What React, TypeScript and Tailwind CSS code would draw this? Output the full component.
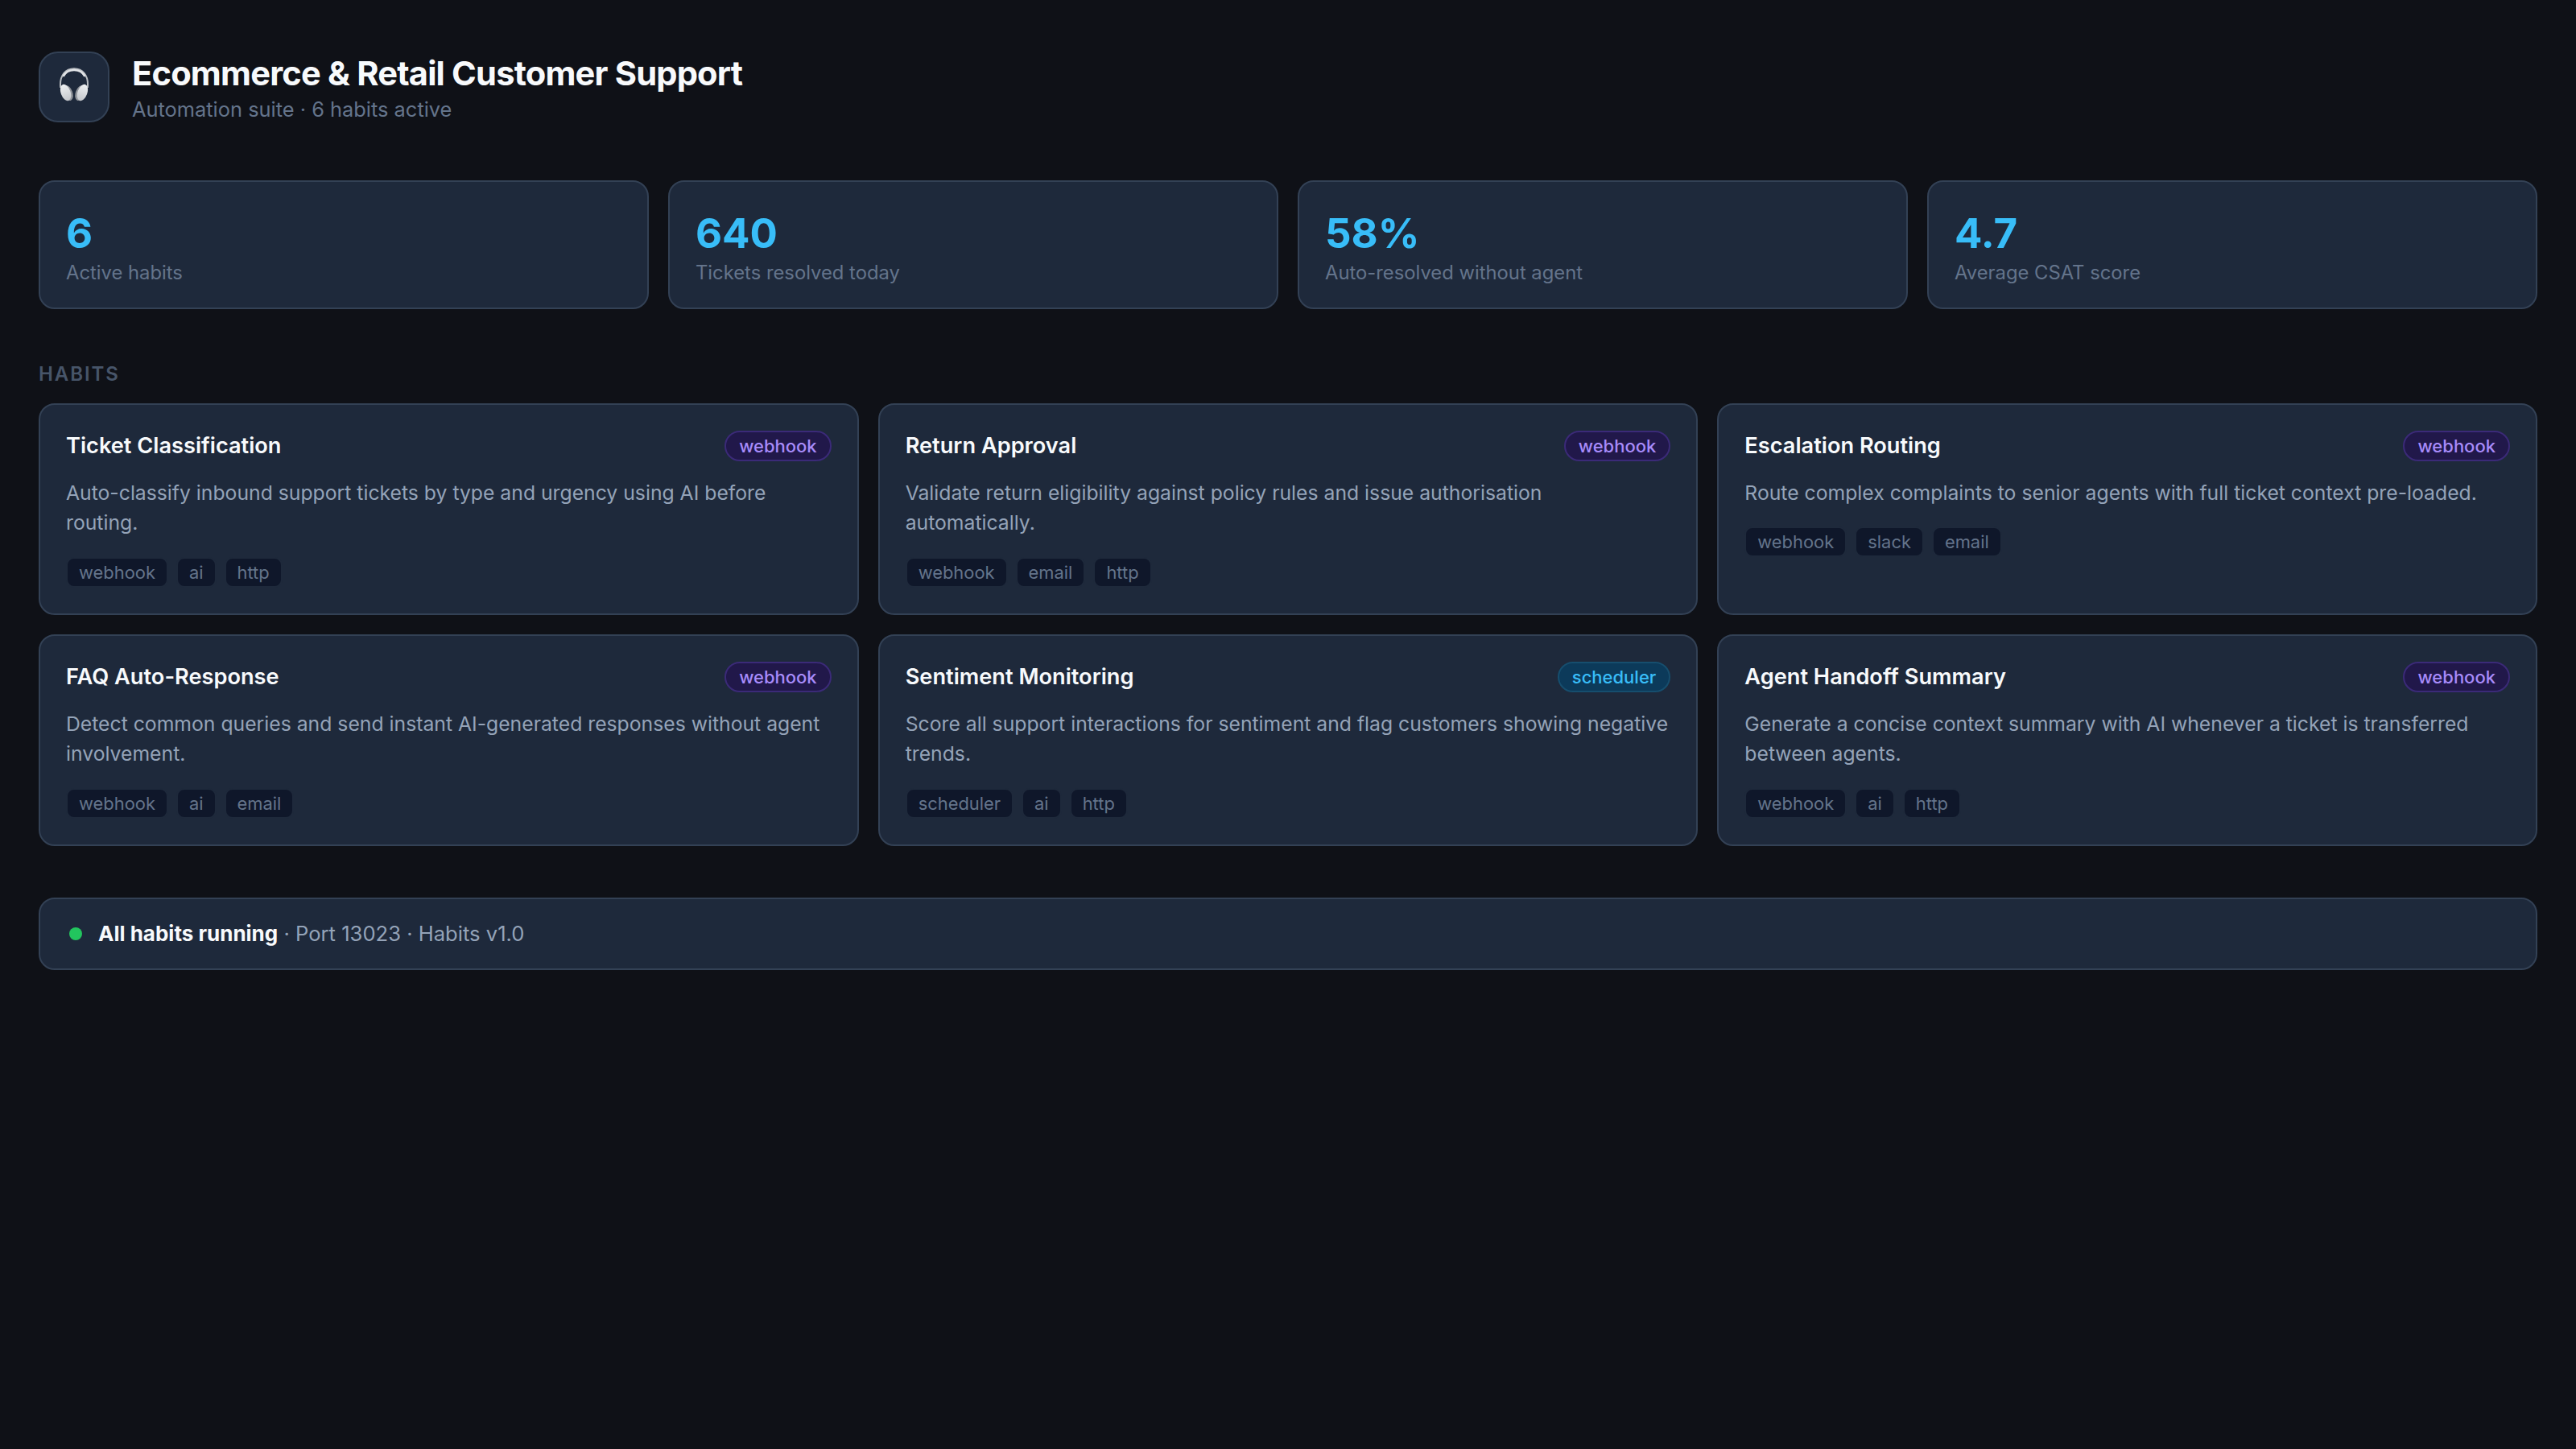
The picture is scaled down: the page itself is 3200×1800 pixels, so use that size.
const stats = [
  { value: "6", label: "Active habits" },
  { value: "640", label: "Tickets resolved today" },
  { value: "58%", label: "Auto-resolved without agent" },
  { value: "4.7", label: "Average CSAT score" },
]

const habits = [
  {
    name: "Ticket Classification",
    trigger: "webhook",
    desc: "Auto-classify inbound support tickets by type and urgency using AI before routing.",
    tags: ["webhook", "ai", "http"],
  },
  {
    name: "Return Approval",
    trigger: "webhook",
    desc: "Validate return eligibility against policy rules and issue authorisation automatically.",
    tags: ["webhook", "email", "http"],
  },
  {
    name: "Escalation Routing",
    trigger: "webhook",
    desc: "Route complex complaints to senior agents with full ticket context pre-loaded.",
    tags: ["webhook", "slack", "email"],
  },
  {
    name: "FAQ Auto-Response",
    trigger: "webhook",
    desc: "Detect common queries and send instant AI-generated responses without agent involvement.",
    tags: ["webhook", "ai", "email"],
  },
  {
    name: "Sentiment Monitoring",
    trigger: "scheduler",
    desc: "Score all support interactions for sentiment and flag customers showing negative trends.",
    tags: ["scheduler", "ai", "http"],
  },
  {
    name: "Agent Handoff Summary",
    trigger: "webhook",
    desc: "Generate a concise context summary with AI whenever a ticket is transferred between agents.",
    tags: ["webhook", "ai", "http"],
  },
]

function Headphones() {
  return (
    <svg className="mb-[6px]" width="38" height="42" viewBox="0 0 38 42" fill="none">
      <defs>
        <linearGradient id="cup" x1="0" y1="0" x2="0" y2="1">
          <stop offset="0" stopColor="#eff1f3" />
          <stop offset="1" stopColor="#c3c6cb" />
        </linearGradient>
      </defs>
      {/* band */}
      <path d="M2.2 25 C0.5 9 9 1.2 19 1.2 C29 1.2 37.5 9 35.8 25" stroke="#b9bdc2" strokeWidth="2" />
      <path d="M5.5 11 C8.5 5 13 3 19 3 C25 3 29.5 5 32.5 11" stroke="#e2e4e7" strokeWidth="2.6" />
      {/* left cup */}
      <ellipse cx="11.5" cy="31.5" rx="5.6" ry="10" transform="rotate(-20 11.5 31.5)" fill="#8f9399" />
      <ellipse cx="8.6" cy="31" rx="6" ry="10.6" transform="rotate(-20 8.6 31)" fill="url(#cup)" />
      {/* right cup */}
      <ellipse cx="26.5" cy="31.5" rx="5.6" ry="10" transform="rotate(20 26.5 31.5)" fill="#8f9399" />
      <ellipse cx="29.4" cy="31" rx="6" ry="10.6" transform="rotate(20 29.4 31)" fill="url(#cup)" />
    </svg>
  )
}

export default function App() {
  return (
    <div className="min-h-screen bg-[#0f1117] px-[48px] pt-[64px] font-['Inter',sans-serif] text-[#f8fafc]">
      <header className="flex h-[88px] items-center gap-[28px] mb-[72px]">
        <div className="flex h-[88px] w-[88px] items-center justify-center rounded-[24px] border-2 border-[#334155] bg-[#1e293b]">
          <Headphones />
        </div>
        <div className="pt-[2px]">
          <h1 className="text-[41.6px] font-bold leading-[50px] tracking-[-0.8px] text-[#f8fafc]">
            Ecommerce &amp; Retail Customer Support
          </h1>
          <p className="mt-[4px] text-[25.4px] leading-[32px] text-[#64748b]">Automation suite · 6 habits active</p>
        </div>
      </header>

      <section className="grid grid-cols-4 gap-[24px] mb-[66px]">
        {stats.map(s => (
          <div key={s.label} className="h-[160px] rounded-[20px] border-2 border-[#334155] bg-[#1e293b] px-[32px] pt-[30px]">
            <div className="text-[51px] font-bold leading-[68px] text-[#38bdf8]">{s.value}</div>
            <div className="text-[23.8px] leading-[29px] text-[#64748b]">{s.label}</div>
          </div>
        ))}
      </section>

      <h2 className="mb-[21px] text-[24px] font-semibold uppercase leading-[30px] tracking-[1.92px] text-[#475569]">Habits</h2>

      <section className="grid grid-cols-3 gap-[24px] mb-[64px]">
        {habits.map(h => (
          <div key={h.name} className="flex h-[263px] flex-col rounded-[20px] border-2 border-[#334155] bg-[#1e293b] p-[32px]">
            <div className="flex items-center justify-between">
              <span className="text-[27.2px] font-semibold leading-[38px] text-[#f8fafc]">{h.name}</span>
              {h.trigger === "scheduler" ? (
                <span className="rounded-full border-2 border-[#164e6e] bg-[#0c3a5a] px-[16px] text-[22px] font-medium leading-[34px] text-[#38bdf8]">
                  {h.trigger}
                </span>
              ) : (
                <span className="rounded-full border-2 border-[#3b2a78] bg-[#21184a] px-[16px] text-[22px] font-medium leading-[34px] text-[#a78bfa]">
                  {h.trigger}
                </span>
              )}
            </div>
            <p className="mt-[21px] mb-[23px] text-[24.74px] leading-[37.44px] text-[#94a3b8]">{h.desc}</p>
            <div className="flex gap-[10px]">
              {h.tags.map(t => (
                <span key={t} className="rounded-[10px] border-2 border-[#1e293b] bg-[#0f172a] px-[14px] text-[21.9px] leading-[34px] text-[#64748b]">
                  {t}
                </span>
              ))}
            </div>
          </div>
        ))}
      </section>

      <footer className="flex h-[90px] items-center gap-[20px] rounded-[20px] border-2 border-[#334155] bg-[#1e293b] px-[36px] text-[25.6px] text-[#94a3b8]">
        <span className="h-[16px] w-[16px] rounded-full bg-[#22c55e]" />
        <span>
          <strong className="text-[26px] font-bold text-[#f8fafc]">All habits running</strong> · Port 13023 · Habits v1.0
        </span>
      </footer>
    </div>
  )
}
